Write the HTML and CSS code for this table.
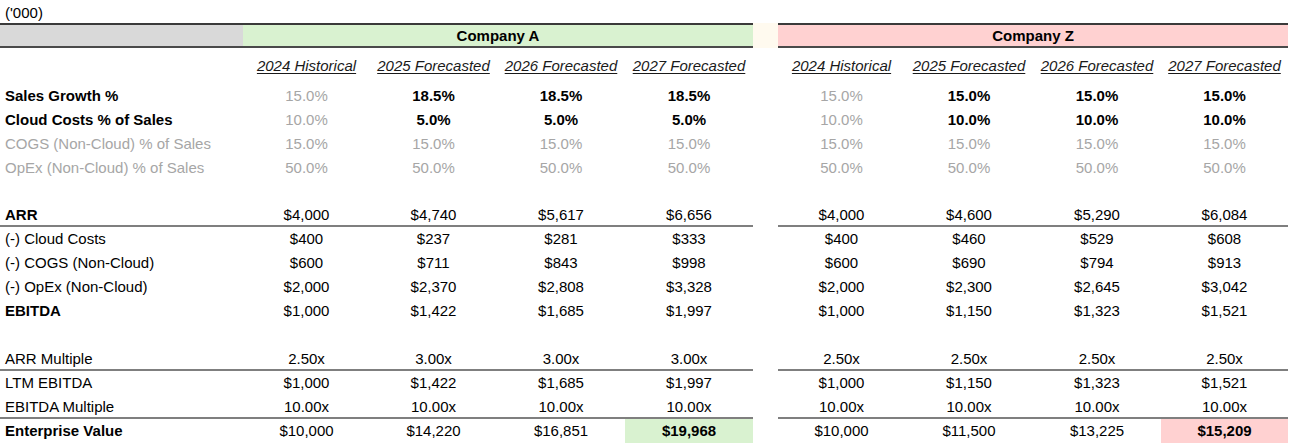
FILE: index.html
```html
<!DOCTYPE html>
<html>
<head>
<meta charset="utf-8">
<link rel="stylesheet" href="styles.css">
</head>
<body>
<div class="sheet">
  <div class="title">('000)</div>

  <div class="row band">
    <div class="c lbl gray"></div>
    <div class="c span4 green b">Company A</div>
    <div class="c gap cream"></div>
    <div class="c span4 pink b">Company Z</div>
  </div>

  <div class="row years">
    <div class="c lbl"></div>
    <div class="c yr">2024 Historical</div>
    <div class="c yr">2025 Forecasted</div>
    <div class="c yr">2026 Forecasted</div>
    <div class="c yr">2027 Forecasted</div>
    <div class="c gap"></div>
    <div class="c yr">2024 Historical</div>
    <div class="c yr">2025 Forecasted</div>
    <div class="c yr">2026 Forecasted</div>
    <div class="c yr">2027 Forecasted</div>
  </div>

  <div class="row">
    <div class="c lbl b">Sales Growth %</div>
    <div class="c mute">15.0%</div><div class="c b">18.5%</div><div class="c b">18.5%</div><div class="c b">18.5%</div>
    <div class="c gap"></div>
    <div class="c mute">15.0%</div><div class="c b">15.0%</div><div class="c b">15.0%</div><div class="c b">15.0%</div>
  </div>
  <div class="row">
    <div class="c lbl b">Cloud Costs % of Sales</div>
    <div class="c mute">10.0%</div><div class="c b">5.0%</div><div class="c b">5.0%</div><div class="c b">5.0%</div>
    <div class="c gap"></div>
    <div class="c mute">10.0%</div><div class="c b">10.0%</div><div class="c b">10.0%</div><div class="c b">10.0%</div>
  </div>
  <div class="row">
    <div class="c lbl mute">COGS (Non-Cloud) % of Sales</div>
    <div class="c mute">15.0%</div><div class="c mute">15.0%</div><div class="c mute">15.0%</div><div class="c mute">15.0%</div>
    <div class="c gap"></div>
    <div class="c mute">15.0%</div><div class="c mute">15.0%</div><div class="c mute">15.0%</div><div class="c mute">15.0%</div>
  </div>
  <div class="row">
    <div class="c lbl mute">OpEx (Non-Cloud) % of Sales</div>
    <div class="c mute">50.0%</div><div class="c mute">50.0%</div><div class="c mute">50.0%</div><div class="c mute">50.0%</div>
    <div class="c gap"></div>
    <div class="c mute">50.0%</div><div class="c mute">50.0%</div><div class="c mute">50.0%</div><div class="c mute">50.0%</div>
  </div>

  <div class="row empty short"></div>

  <div class="row rule">
    <div class="c lbl b">ARR</div>
    <div class="c">$4,000</div><div class="c">$4,740</div><div class="c">$5,617</div><div class="c">$6,656</div>
    <div class="c gap"></div>
    <div class="c">$4,000</div><div class="c">$4,600</div><div class="c">$5,290</div><div class="c">$6,084</div>
  </div>
  <div class="row">
    <div class="c lbl">(-) Cloud Costs</div>
    <div class="c">$400</div><div class="c">$237</div><div class="c">$281</div><div class="c">$333</div>
    <div class="c gap"></div>
    <div class="c">$400</div><div class="c">$460</div><div class="c">$529</div><div class="c">$608</div>
  </div>
  <div class="row">
    <div class="c lbl">(-) COGS (Non-Cloud)</div>
    <div class="c">$600</div><div class="c">$711</div><div class="c">$843</div><div class="c">$998</div>
    <div class="c gap"></div>
    <div class="c">$600</div><div class="c">$690</div><div class="c">$794</div><div class="c">$913</div>
  </div>
  <div class="row">
    <div class="c lbl">(-) OpEx (Non-Cloud)</div>
    <div class="c">$2,000</div><div class="c">$2,370</div><div class="c">$2,808</div><div class="c">$3,328</div>
    <div class="c gap"></div>
    <div class="c">$2,000</div><div class="c">$2,300</div><div class="c">$2,645</div><div class="c">$3,042</div>
  </div>
  <div class="row">
    <div class="c lbl b">EBITDA</div>
    <div class="c">$1,000</div><div class="c">$1,422</div><div class="c">$1,685</div><div class="c">$1,997</div>
    <div class="c gap"></div>
    <div class="c">$1,000</div><div class="c">$1,150</div><div class="c">$1,323</div><div class="c">$1,521</div>
  </div>

  <div class="row empty"></div>

  <div class="row rule">
    <div class="c lbl">ARR Multiple</div>
    <div class="c">2.50x</div><div class="c">3.00x</div><div class="c">3.00x</div><div class="c">3.00x</div>
    <div class="c gap"></div>
    <div class="c">2.50x</div><div class="c">2.50x</div><div class="c">2.50x</div><div class="c">2.50x</div>
  </div>
  <div class="row">
    <div class="c lbl">LTM EBITDA</div>
    <div class="c">$1,000</div><div class="c">$1,422</div><div class="c">$1,685</div><div class="c">$1,997</div>
    <div class="c gap"></div>
    <div class="c">$1,000</div><div class="c">$1,150</div><div class="c">$1,323</div><div class="c">$1,521</div>
  </div>
  <div class="row rule">
    <div class="c lbl">EBITDA Multiple</div>
    <div class="c">10.00x</div><div class="c">10.00x</div><div class="c">10.00x</div><div class="c">10.00x</div>
    <div class="c gap"></div>
    <div class="c">10.00x</div><div class="c">10.00x</div><div class="c">10.00x</div><div class="c">10.00x</div>
  </div>
  <div class="row">
    <div class="c lbl b">Enterprise Value</div>
    <div class="c">$10,000</div><div class="c">$14,220</div><div class="c">$16,851</div><div class="c b green">$19,968</div>
    <div class="c gap"></div>
    <div class="c">$10,000</div><div class="c">$11,500</div><div class="c">$13,225</div><div class="c b pink">$15,209</div>
  </div>
</div>
</body>
</html>
```

FILE: styles.css
```css
* { box-sizing: border-box; }

body {
  margin: 0;
  background: #ffffff;
  font-family: "Liberation Sans", Arial, sans-serif;
  font-size: 15px;
  color: #000;
}

.sheet {
  width: 1292px;
}

.title {
  height: 23px;
  line-height: 26px;
  padding-left: 5px;
}

.row {
  display: grid;
  grid-template-columns: 243px 127px 127px 128px 128px 25px 127px 128px 128px 127px;
  height: 24px;
}

.c {
  text-align: center;
  line-height: 24px;
  white-space: nowrap;
}

.lbl {
  text-align: left;
  padding-left: 5px;
}

.b { font-weight: bold; }

.mute { color: #a6a6a6; }

.span4 { grid-column: span 4; }

.band .c {
  border-top: 2px solid #3a3a3a;
  border-bottom: 2px solid #4a4a4a;
  line-height: 21px;
}

.band .gap {
  border: none;
}

.gray { background: #d9d9d9; }
.green { background: #d9f2d0; }
.pink { background: #ffd1d1; }
.cream { background: #fffaef; }

.years {
  height: 37px;
}

.years .c {
  line-height: 37px;
}

.yr {
  font-style: italic;
  text-decoration: underline;
  text-underline-offset: 2px;
  color: #1a1a1a;
}

.empty {
  height: 24px;
}

.empty.short {
  height: 23px;
}

.rule .c {
  box-shadow: inset 0 -2px 0 #7f7f7f;
}

.rule .gap {
  box-shadow: none;
}
```
